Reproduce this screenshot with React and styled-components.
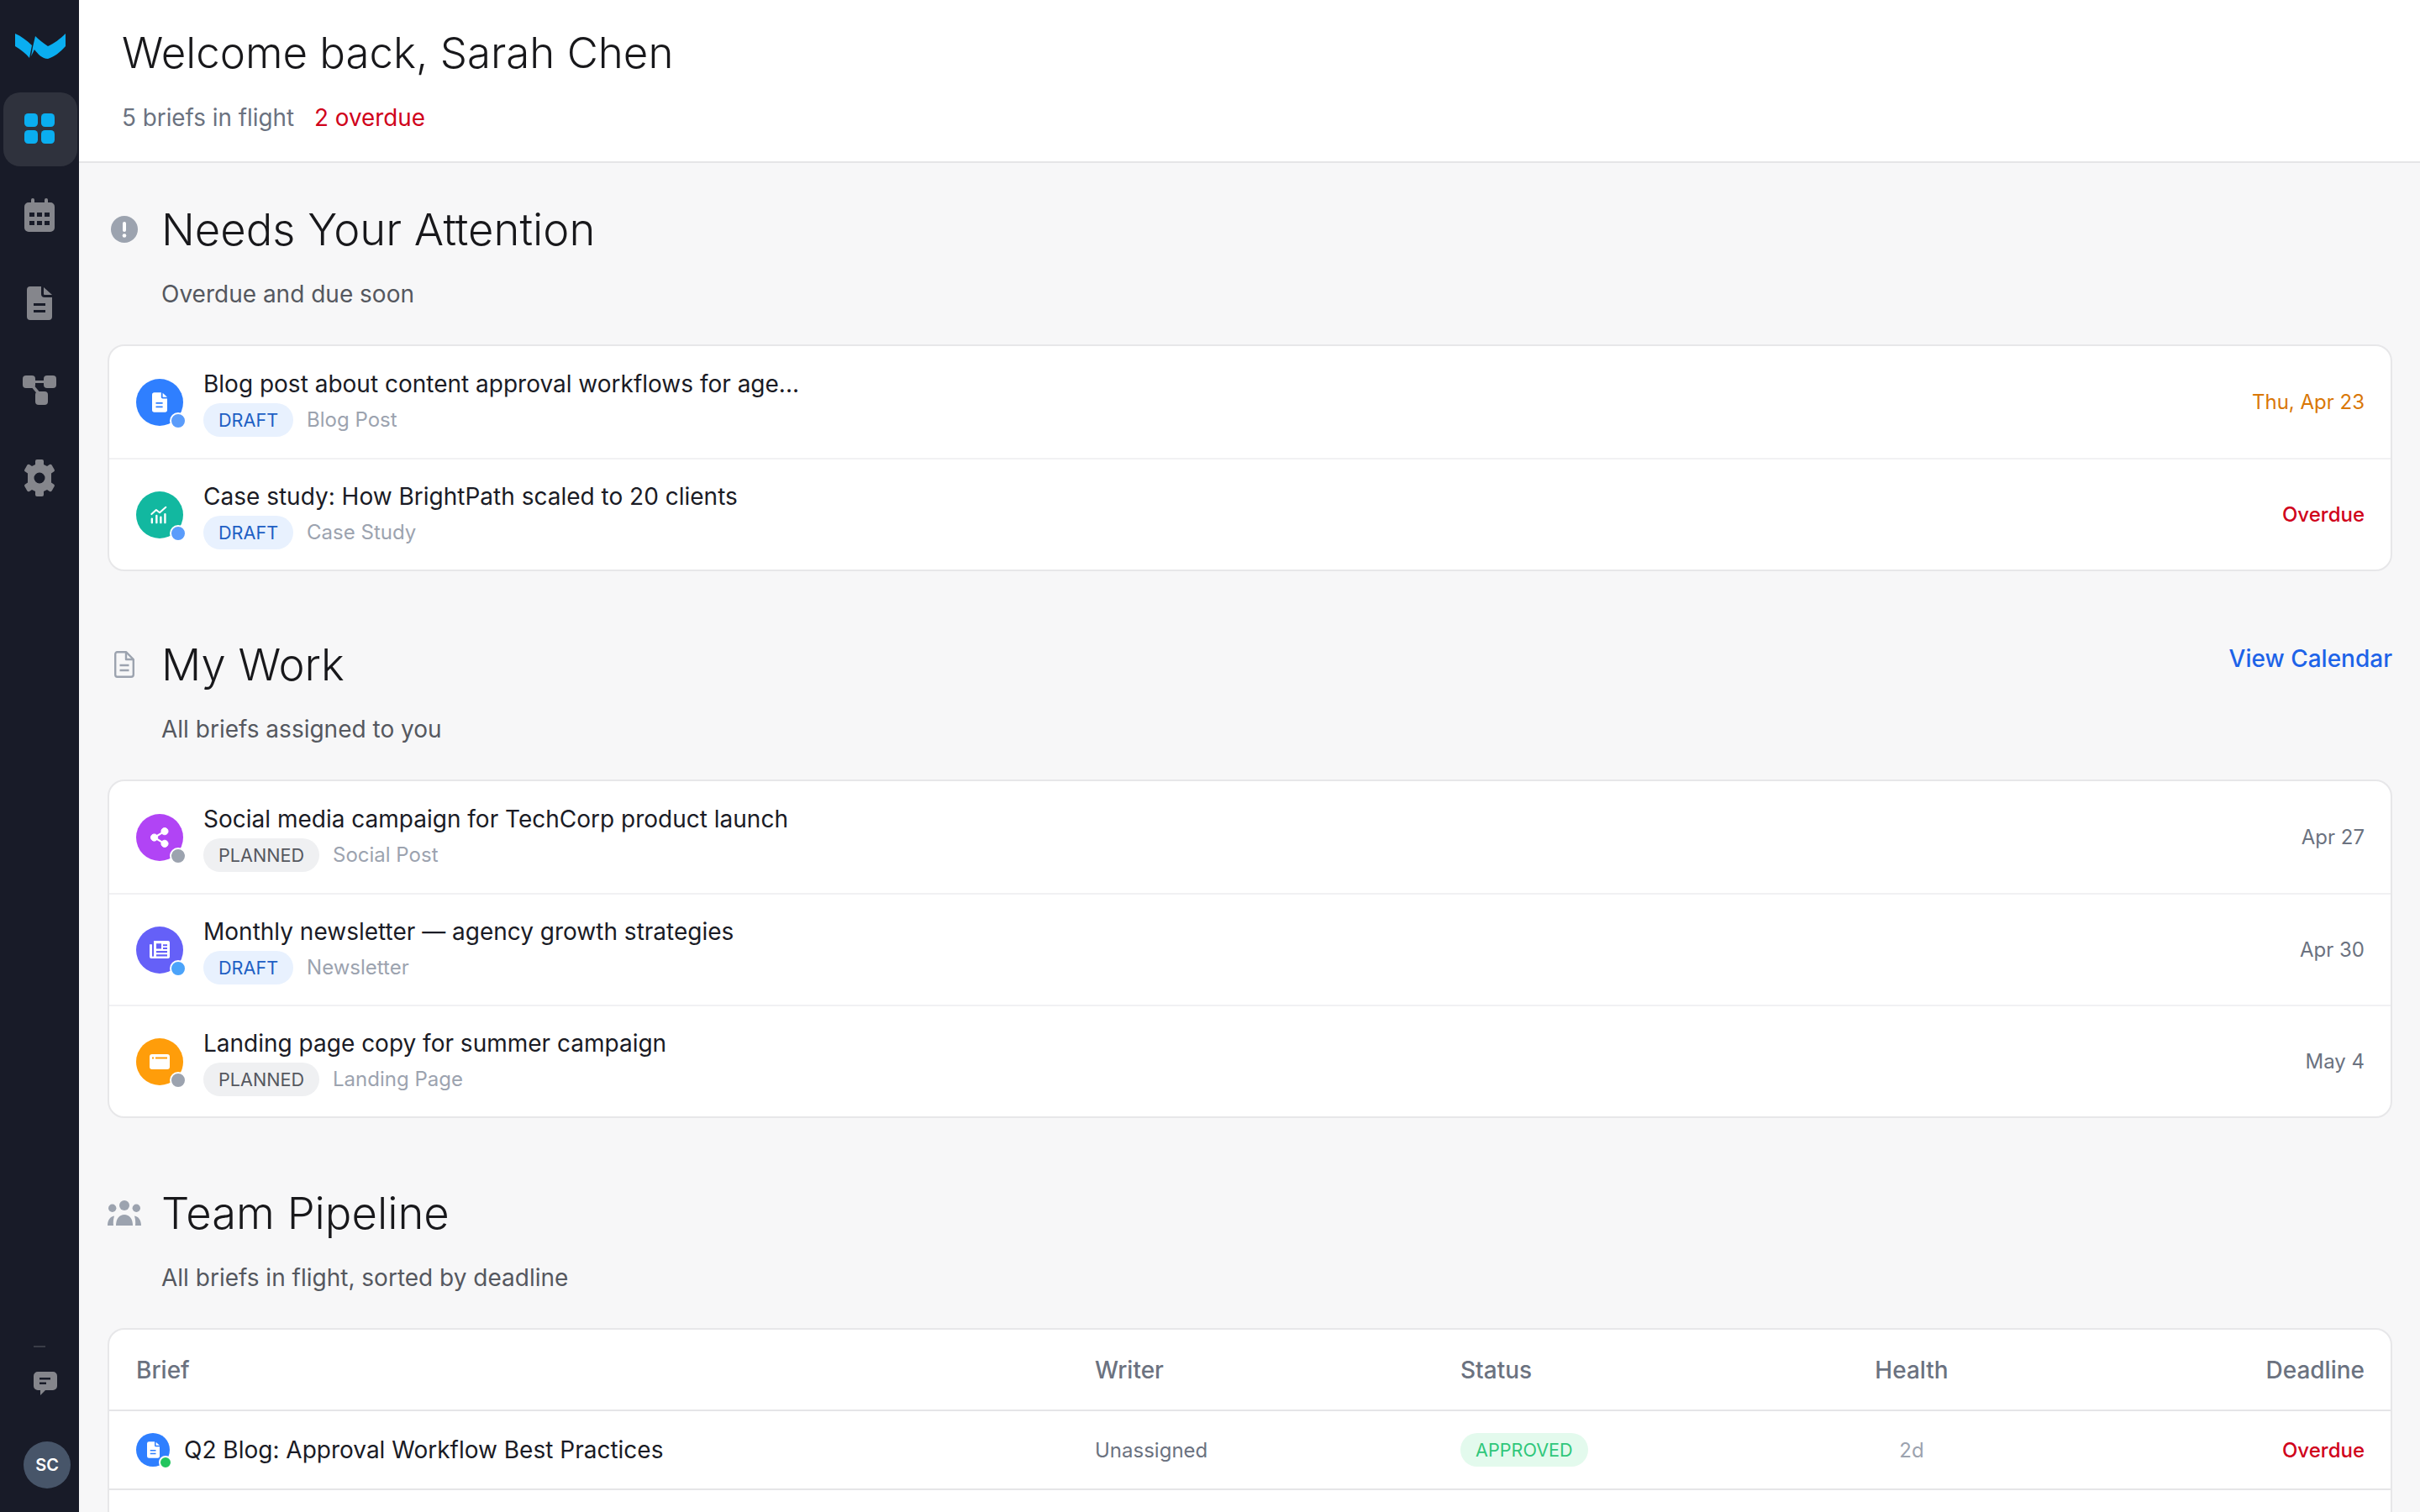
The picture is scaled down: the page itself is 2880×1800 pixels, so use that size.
import React from 'react';
import styled, { createGlobalStyle } from 'styled-components';

const Global = createGlobalStyle`
  html, body { margin: 0; padding: 0; height: 100%; overflow: hidden; }
  body { font-family: Inter, "Liberation Sans", sans-serif; background: #f7f7f8; }
  * { box-sizing: border-box; }
`;

const Shell = styled.div`
  display: flex;
  width: 2880px;
  height: 1800px;
  overflow: hidden;
`;

const Sidebar = styled.aside`
  flex: 0 0 94px;
  background: #181b28;
  display: flex;
  flex-direction: column;
  padding: 40px 2px 28px 4px;
`;

const Logo = styled.svg`
  width: 62px;
  height: 30px;
  margin: 0 0 40px 13px;
`;

const Nav = styled.nav`
  display: flex;
  flex-direction: column;
  gap: 16px;
`;

const NavItem = styled.div`
  width: 88px;
  height: 88px;
  padding: 0 2px ${p => p.$lift ?? 3}px 0;
  border-radius: 20px;
  display: flex;
  align-items: center;
  justify-content: center;
  color: ${p => (p.$active ? '#0aaef0' : '#85868c')};
  background: ${p => (p.$active ? '#2f323d' : 'transparent')};
`;

const SideBottom = styled.div`
  margin-top: auto;
  display: flex;
  flex-direction: column;
`;

const SideRule = styled.div`
  width: 14px;
  height: 2px;
  background: #3a3d47;
  margin: 0 0 29px 36px;
`;

const ChatBtn = styled.div`
  color: #85868c;
  height: 28px;
  margin: 0 0 55px 36px;
  display: flex;
`;

const UserBadge = styled.div`
  width: 56px;
  height: 56px;
  margin-left: 24px;
  border-radius: 50%;
  background: #475569;
  color: #fff;
  font-size: 20px;
  font-weight: 600;
  display: flex;
  align-items: center;
  justify-content: center;
`;

const Main = styled.main`
  flex: 1;
  min-width: 0;
  display: flex;
  flex-direction: column;
`;

const TopBar = styled.header`
  height: 194px;
  background: #fff;
  border-bottom: 2px solid #e5e5e7;
  padding: 30px 0 0 51px;
  flex-shrink: 0;
`;

const PageTitle = styled.h1`
  margin: 0;
  font-size: 51px;
  line-height: 66px;
  font-weight: 300;
  color: #18181b;
`;

const TopMeta = styled.div`
  margin-top: 26px;
  display: flex;
  gap: 24px;
  font-size: 27.8px;
  line-height: 36px;
`;

const MetaMuted = styled.span`
  color: #6b7280;
`;

const MetaAlert = styled.span`
  color: #d0021b;
`;

const Content = styled.div`
  flex: 1;
  min-height: 0;
  overflow: hidden;
  padding: 46px 33px 0 34px;
`;

const Section = styled.section`
  margin-bottom: ${p => p.$gap || 78}px;
`;

const SectionHead = styled.div`
  display: flex;
  align-items: flex-start;
  justify-content: space-between;
`;

const HeadLeft = styled.div`
  display: grid;
  grid-template-columns: 64px 1fr;
  align-items: center;
`;

const HeadIcon = styled.div`
  display: flex;
  color: #9ca3af;
  padding-left: ${p => p.$pad ?? 4}px;
`;

const SectionTitle = styled.h2`
  margin: 0;
  font-size: 52.5px;
  line-height: 66px;
  font-weight: 300;
  color: #18181b;
`;

const SectionSub = styled.p`
  grid-column: 2;
  margin: 26px 0 0;
  font-size: 28px;
  line-height: 36px;
  color: #55585f;
`;

const ViewLink = styled.a`
  font-size: 28px;
  line-height: 36px;
  font-weight: 500;
  color: #1d63e8;
  margin-top: 8px;
`;

const Card = styled.div`
  margin-top: 42px;
  background: #fff;
  border: 2px solid #e7e7e9;
  border-radius: 20px;
  overflow: hidden;
`;

const Row = styled.div`
  height: 133px;
  display: flex;
  align-items: center;
  padding: 0 31px 0 32px;
  & + & { border-top: 2px solid #f1f1f3; }
`;

const Avatar = styled.div`
  position: relative;
  flex: 0 0 ${p => p.$size || 56}px;
  height: ${p => p.$size || 56}px;
  border-radius: 50%;
  background: ${p => p.$bg};
  color: #fff;
  display: flex;
  align-items: center;
  justify-content: center;
`;

const StatusDot = styled.span`
  position: absolute;
  right: ${p => p.$off || -4}px;
  bottom: ${p => p.$off || -4}px;
  width: ${p => p.$size || 20}px;
  height: ${p => p.$size || 20}px;
  border-radius: 50%;
  border: 2px solid #fff;
  background: ${p => p.$color};
`;

const RowBody = styled.div`
  flex: 1;
  min-width: 0;
  margin-left: 24px;
`;

const RowTitle = styled.div`
  font-size: 28px;
  line-height: 38px;
  color: #1a1b25;
`;

const RowMeta = styled.div`
  display: flex;
  align-items: center;
  gap: 16px;
  margin-top: 4px;
`;

const Pill = styled.span`
  height: 40px;
  padding: 0 18px;
  border-radius: 20px;
  font-size: 21.6px;
  display: inline-flex;
  align-items: center;
  background: ${p => p.$bg};
  color: ${p => p.$color};
`;

const TypeLabel = styled.span`
  font-size: 24px;
  color: #9ca3af;
`;

const RowDate = styled.div`
  font-size: 24px;
  color: ${p => p.$color || '#6b7280'};
  font-weight: ${p => (p.$strong ? 500 : 400)};
`;

const TableGrid = styled.div`
  display: grid;
  grid-template-columns: 1141px 435px 382px 310px 1fr;
  align-items: center;
  padding: 0 31px 0 32px;
  height: ${p => p.$h}px;
  border-bottom: 2px solid #e5e5e7;
`;

const Th = styled.div`
  font-size: 28px;
  font-weight: 500;
  color: #6b7280;
  text-align: ${p => p.$align || 'left'};
`;

const BriefCell = styled.div`
  display: flex;
  align-items: center;
  gap: 17px;
  font-size: 28px;
  color: #1a1b25;
`;

const Td = styled.div`
  font-size: 24px;
  color: ${p => p.$color || '#6b7280'};
  font-weight: ${p => (p.$strong ? 500 : 400)};
  text-align: ${p => p.$align || 'left'};
`;

const DashIcon = () => (
  <svg width="36" height="36" viewBox="0 0 36 36" fill="currentColor">
    <rect x="0" y="0" width="16" height="16" rx="4.5" />
    <rect x="20" y="0" width="16" height="16" rx="4.5" />
    <rect x="0" y="20" width="16" height="16" rx="4.5" />
    <rect x="20" y="20" width="16" height="16" rx="4.5" />
  </svg>
);

const CalIcon = () => (
  <svg width="36" height="40" viewBox="0 0 36 40" fill="currentColor">
    <path fillRule="evenodd" d="M10 0a2 2 0 0 1 2 2v3h12V2a2 2 0 0 1 4 0v3h3a5 5 0 0 1 5 5v25a5 5 0 0 1-5 5H5a5 5 0 0 1-5-5V10a5 5 0 0 1 5-5h3V2a2 2 0 0 1 2-2zM6 17v5h6v-5zM15 17v5h6v-5zM24 17v5h6v-5zM6 27v5h6v-5zM15 27v5h6v-5zM24 27v5h6v-5z" />
  </svg>
);

const DocIcon = () => (
  <svg width="30" height="40" viewBox="0 0 30 40" fill="currentColor">
    <path fillRule="evenodd" d="M4 0h13v9a4 4 0 0 0 4 4h9v23a4 4 0 0 1-4 4H4a4 4 0 0 1-4-4V4a4 4 0 0 1 4-4zM20 1l10 9h-9a1 1 0 0 1-1-1zM8 20v3h14v-3zM8 28v3h14v-3z" />
  </svg>
);

const FlowIcon = () => (
  <svg width="40" height="35" viewBox="0 0 40 35" fill="currentColor">
    <rect x="0" y="0" width="15" height="15" rx="4" />
    <rect x="25" y="0" width="15" height="15" rx="4" />
    <rect x="15" y="19" width="15" height="16" rx="4" />
    <path d="M14 6h12v3H14z" />
    <path d="M9 12l3-2 10 12-3 2z" />
  </svg>
);

const GearIcon = () => (
  <svg width="40" height="44" viewBox="0 0 40 44" fill="currentColor">
    <path fillRule="evenodd" d="M15 2a2 2 0 0 1 2-2h6a2 2 0 0 1 2 2v4L29 8l3-2a2 2 0 0 1 2.700.7l3 5.200a2 2 0 0 1-.7 2.700L34 16.400V27.600l3 1.800a2 2 0 0 1 .7 2.700l-3 5.200a2 2 0 0 1-2.700.7L29 36l-4 2v4a2 2 0 0 1-2 2h-6a2 2 0 0 1-2-2v-4l-4-2-3 2a2 2 0 0 1-2.700-.7l-3-5.200a2 2 0 0 1 .7-2.700L6 27.600V16.400L3 14.600a2 2 0 0 1-.7-2.700l3-5.200A2 2 0 0 1 8 6l3 2 4-2zM20 15.500a6.500 6.500 0 1 0 0 13 6.500 6.500 0 0 0 0-13z" />
  </svg>
);

const ChatIcon = () => (
  <svg width="28" height="28" viewBox="0 0 28 28" fill="currentColor">
    <path fillRule="evenodd" d="M5 0h18a5 5 0 0 1 5 5v12a5 5 0 0 1-5 5H14l-6 6v-6H5a5 5 0 0 1-5-5V5a5 5 0 0 1 5-5zM7 7v2.500h13V7zM7 12.500v2.500h8v-2.500z" />
  </svg>
);

const AlertIcon = () => (
  <svg width="32" height="32" viewBox="0 0 32 32">
    <circle cx="16" cy="16" r="16" fill="currentColor" />
    <rect x="14" y="7" width="4" height="12" rx="2" fill="#fff" />
    <circle cx="16" cy="23.500" r="2.300" fill="#fff" />
  </svg>
);

const FileOutline = () => (
  <svg width="24" height="32" viewBox="0 0 24 32" fill="none" stroke="currentColor" strokeWidth="2.400" strokeLinejoin="round">
    <path d="M3.500 1.200h10.500l8.800 8.800v18a2.800 2.800 0 0 1-2.800 2.800H3.500a2.300 2.800 0 0 1-2.300-2.800V4a2.300 2.800 0 0 1 2.300-2.800z" />
    <path d="M14 1.200v8.800h8.800M6.500 17h11M6.500 23h11" />
  </svg>
);

const TeamIcon = () => (
  <svg width="40" height="30" viewBox="0 0 40 30" fill="currentColor">
    <circle cx="20" cy="6" r="6" />
    <circle cx="5.700" cy="9.300" r="4.700" />
    <circle cx="34.300" cy="9.300" r="4.700" />
    <path d="M10 30C10 22 14 17 20 17C26 17 30 22 30 30Z" />
    <path d="M0 30C0 24 3 19 8 18.500C7 22 6.500 26 7 30ZM40 30C40 24 37 19 32 18.500C33 22 33.500 26 33 30Z" />
  </svg>
);

const TypeDoc = ({ w = 18, h = 24 }) => (
  <svg width={w} height={h} viewBox="0 0 20 26" fill="#fff">
    <path fillRule="evenodd" d="M3 0h9v6a2 2 0 0 0 2 2h6v15a3 3 0 0 1-3 3H3a3 3 0 0 1-3-3V3a3 3 0 0 1 3-3zM14 .500L20 6h-6zM5 13v2h9v-2zM5 18v2h9v-2z" />
  </svg>
);

const TypeChart = () => (
  <svg width="24" height="22" viewBox="0 0 24 24" fill="none" stroke="#fff" strokeWidth="2.200" strokeLinecap="round" strokeLinejoin="round">
    <path d="M1.500 11l6-5.500 4.500 3.500 8-7" />
    <path d="M2 17v5M8 13v9M13.500 15v7M19 11v11" strokeWidth="2.600" />
  </svg>
);

const TypeShare = () => (
  <svg width="22" height="24" viewBox="0 0 24 26" fill="#fff" stroke="#fff">
    <circle cx="5" cy="13" r="4.500" />
    <circle cx="18.500" cy="5" r="4.500" />
    <circle cx="18.500" cy="21" r="4.500" />
    <path d="M5 13L18.500 5M5 13l13.500 8" strokeWidth="2.400" />
  </svg>
);

const TypeNews = () => (
  <svg width="24" height="21" viewBox="0 0 24 20" preserveAspectRatio="none" fill="#fff">
    <path fillRule="evenodd" d="M5 0h17a2 2 0 0 1 2 2v16a2 2 0 0 1-2 2H2a2 2 0 0 1-2-2V4h3v13a1 1 0 0 0 2 0zM8 3v6h6V3zM16 4v2h5V4zM16 7.500v2h5v-2zM8 11.500v2h13v-2zM8 15.500v2h13v-2z" />
  </svg>
);

const TypePage = () => (
  <svg width="24" height="18" viewBox="0 0 24 18" fill="#fff">
    <path fillRule="evenodd" d="M3 0h18a3 3 0 0 1 3 3v12a3 3 0 0 1-3 3H3a3 3 0 0 1-3-3V3a3 3 0 0 1 3-3zM3 3.500v2h2v-2zM7 3.500v2h14v-2z" />
  </svg>
);

const DRAFT = { label: 'DRAFT', bg: '#e8f1fe', color: '#1d5fc4', dot: '#5a9cfb' };
const PLANNED = { label: 'PLANNED', bg: '#eff0f2', color: '#55585f', dot: '#9ca3af' };

const attention = [
  { title: 'Blog post about content approval workflows for age...', status: DRAFT, type: 'Blog Post', bg: '#2f7fff', icon: <TypeDoc />, date: 'Thu, Apr 23', color: '#d97706' },
  { title: 'Case study: How BrightPath scaled to 20 clients', status: DRAFT, type: 'Case Study', bg: '#12b8a0', icon: <TypeChart />, date: 'Overdue', color: '#d0021b', strong: true },
];

const myWork = [
  { title: 'Social media campaign for TechCorp product launch', status: PLANNED, type: 'Social Post', bg: '#b144f5', icon: <TypeShare />, date: 'Apr 27' },
  { title: 'Monthly newsletter — agency growth strategies', status: DRAFT, type: 'Newsletter', bg: '#6560f8', icon: <TypeNews />, date: 'Apr 30', dot: '#4ba3fa' },
  { title: 'Landing page copy for summer campaign', status: PLANNED, type: 'Landing Page', bg: '#ff9d0a', icon: <TypePage />, date: 'May 4' },
];

const BriefRow = ({ item }) => (
  <Row>
    <Avatar $bg={item.bg}>
      {item.icon}
      <StatusDot $color={item.dot || item.status.dot} />
    </Avatar>
    <RowBody>
      <RowTitle>{item.title}</RowTitle>
      <RowMeta>
        <Pill $bg={item.status.bg} $color={item.status.color}>{item.status.label}</Pill>
        <TypeLabel>{item.type}</TypeLabel>
      </RowMeta>
    </RowBody>
    <RowDate $color={item.color} $strong={item.strong}>{item.date}</RowDate>
  </Row>
);

export default function App() {
  return (
    <>
      <Global />
      <Shell>
        <Sidebar>
          <Logo viewBox="0 0 62 30">
            <path fill="#0aaef0" d="M1 0C8 3 15 8 21 14L18 29C14 24 8 19 1 15Z" />
            <path fill="#0aaef0" d="M22 16L25 3C29 7 34 11 40 15C47 12 55 6 61 0V15C55 22 47 28 40 30C33 30 28 24 24 19L20 27Z" />
          </Logo>
          <Nav>
            <NavItem $active><DashIcon /></NavItem>
            <NavItem $lift={5}><CalIcon /></NavItem>
            <NavItem><DocIcon /></NavItem>
            <NavItem><FlowIcon /></NavItem>
            <NavItem><GearIcon /></NavItem>
          </Nav>
          <SideBottom>
            <SideRule />
            <ChatBtn><ChatIcon /></ChatBtn>
            <UserBadge>SC</UserBadge>
          </SideBottom>
        </Sidebar>
        <Main>
          <TopBar>
            <PageTitle>Welcome back, Sarah Chen</PageTitle>
            <TopMeta>
              <MetaMuted>5 briefs in flight</MetaMuted>
              <MetaAlert>2 overdue</MetaAlert>
            </TopMeta>
          </TopBar>
          <Content>
            <Section>
              <SectionHead>
                <HeadLeft>
                  <HeadIcon><AlertIcon /></HeadIcon>
                  <SectionTitle>Needs Your Attention</SectionTitle>
                  <SectionSub>Overdue and due soon</SectionSub>
                </HeadLeft>
              </SectionHead>
              <Card>{attention.map(i => <BriefRow key={i.title} item={i} />)}</Card>
            </Section>
            <Section $gap={80}>
              <SectionHead>
                <HeadLeft>
                  <HeadIcon $pad={8}><FileOutline /></HeadIcon>
                  <SectionTitle>My Work</SectionTitle>
                  <SectionSub>All briefs assigned to you</SectionSub>
                </HeadLeft>
                <ViewLink>View Calendar</ViewLink>
              </SectionHead>
              <Card>{myWork.map(i => <BriefRow key={i.title} item={i} />)}</Card>
            </Section>
            <Section>
              <SectionHead>
                <HeadLeft>
                  <HeadIcon $pad={0}><TeamIcon /></HeadIcon>
                  <SectionTitle>Team Pipeline</SectionTitle>
                  <SectionSub>All briefs in flight, sorted by deadline</SectionSub>
                </HeadLeft>
              </SectionHead>
              <Card>
                <TableGrid $h={97}>
                  <Th>Brief</Th>
                  <Th>Writer</Th>
                  <Th>Status</Th>
                  <Th $align="center">Health</Th>
                  <Th $align="right">Deadline</Th>
                </TableGrid>
                <TableGrid $h={94}>
                  <BriefCell>
                    <Avatar $bg="#2f7fff" $size={40}>
                      <TypeDoc w={15} h={20} />
                      <StatusDot $color="#22c55e" $size={16} $off={-3} />
                    </Avatar>
                    Q2 Blog: Approval Workflow Best Practices
                  </BriefCell>
                  <Td>Unassigned</Td>
                  <div><Pill $bg="#e3faed" $color="#2fc77a">APPROVED</Pill></div>
                  <Td $align="center" $color="#9ca3af">2d</Td>
                  <Td $align="right" $color="#d0021b" $strong>Overdue</Td>
                </TableGrid>
                <TableGrid $h={94} />
              </Card>
            </Section>
          </Content>
        </Main>
      </Shell>
    </>
  );
}
